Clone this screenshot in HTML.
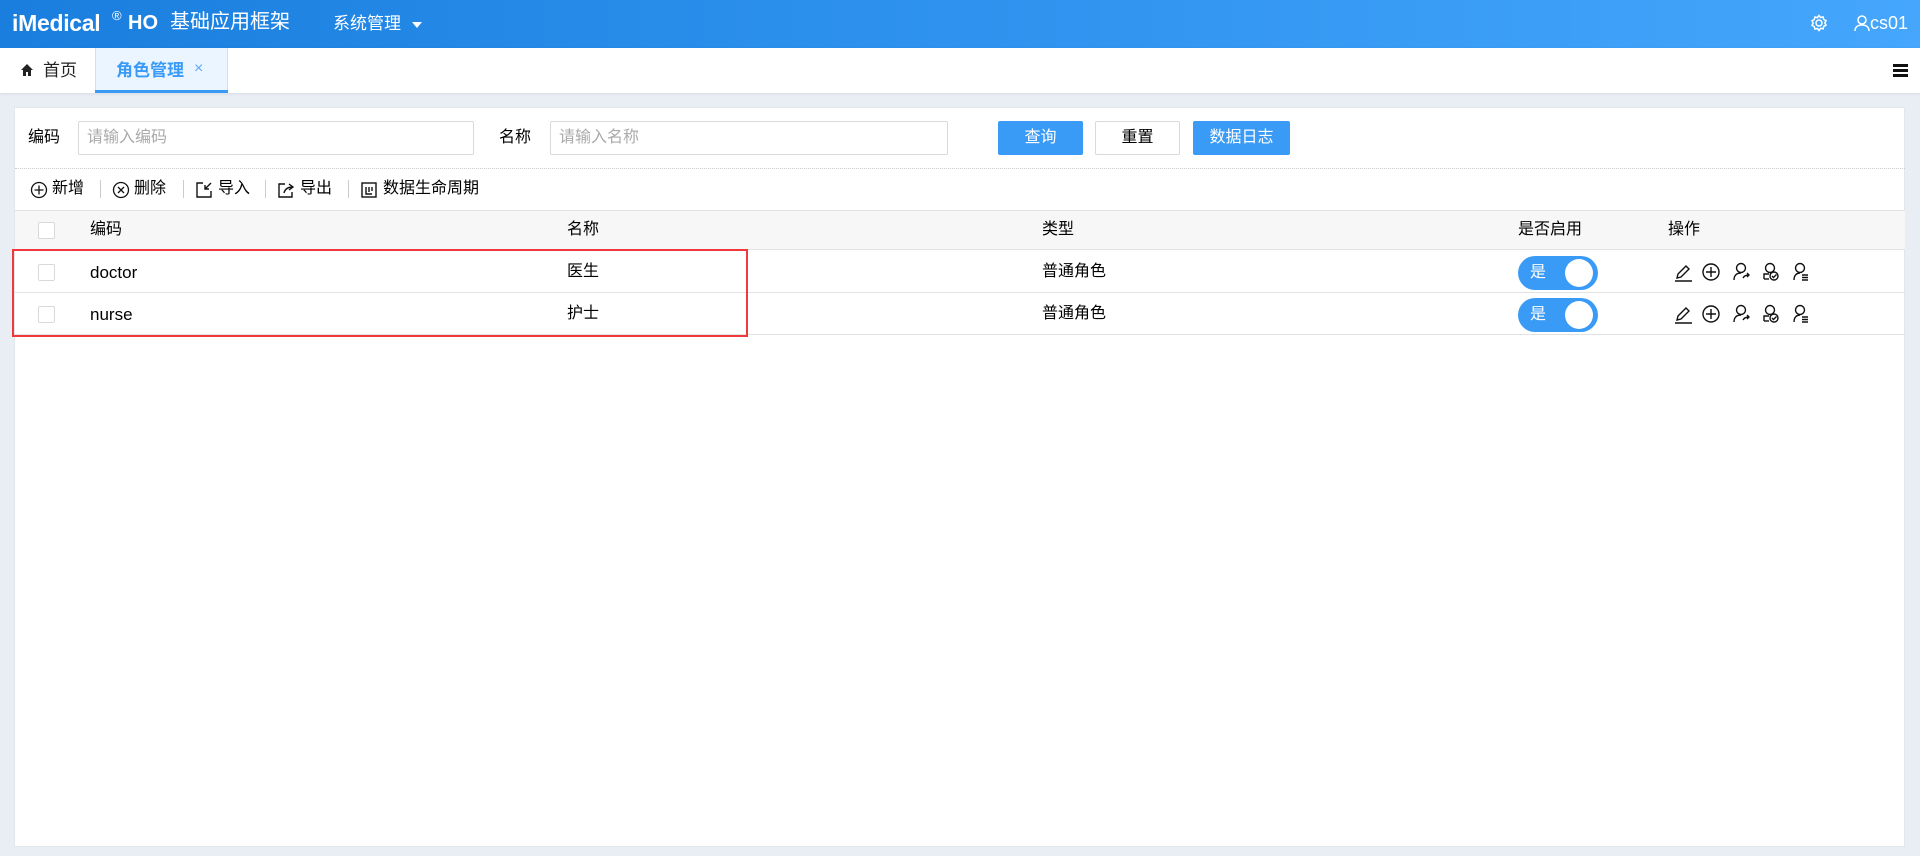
<!DOCTYPE html>
<html><head><meta charset="utf-8"><style>
*{box-sizing:border-box;margin:0;padding:0}
body{width:1920px;height:856px;overflow:hidden;background:#e9edf4;font-family:"Liberation Sans","Noto Sans CJK SC",sans-serif;color:#000;position:relative;line-height:1}
.abs{position:absolute}
.hdr{left:0;top:0;width:1920px;height:48px;background:linear-gradient(90deg,#1a7ede 0%,#2e92ee 50%,#45a6fc 100%);color:#fff}
.tabs{left:0;top:48px;width:1920px;height:45px;background:#fff;box-shadow:0 1px 3px rgba(0,0,0,.08)}
.card{left:14px;top:107px;width:1891px;height:740px;background:#fff;border:1px solid #e3e6eb}
.inp{height:34px;border:1px solid #d9d9d9;border-radius:2px;color:#aaa;font-size:16px;line-height:32px;padding-left:8px}
.btn{top:121px;height:34px;border-radius:2px;font-size:16px;line-height:34px;text-align:center}
.t16{font-size:16px}
.sep{width:1px;height:18px;background:#ccc;top:180px}
.cb{width:17px;height:17px;border:1px solid #d9d9d9;border-radius:2px;background:#fff}
.hl{height:1px;background:#e2e2e2;left:15px;width:1890px}
</style></head><body>
<div class="abs hdr">
  <div class="abs" style="left:12px;top:12px;font-size:23px;font-weight:bold;letter-spacing:-0.3px">iMedical</div>
  <div class="abs" style="left:112px;top:9px;font-size:13px">®</div>
  <div class="abs" style="left:128px;top:13px;font-size:20px;font-weight:bold">HO</div>
  <div class="abs" style="left:170px;top:12px;font-size:20px">基础应用框架</div>
  <div class="abs" style="left:333px;top:15px;font-size:17px">系统管理</div>
  <div class="abs" style="left:412px;top:22px;width:0;height:0;border-left:5px solid transparent;border-right:5px solid transparent;border-top:6px solid #fff"></div>
  <svg class="abs" style="left:1810px;top:14px" width="18" height="18" viewBox="0 0 18 18" fill="none" stroke="#fff" stroke-width="1.5"><circle cx="9" cy="9" r="3"/><path d="M9 1.5l1.6 2 2.5-.6.6 2.5 2.3 1.2-1.2 2.3 1.2 2.3-2.3 1.2-.6 2.5-2.5-.6L9 16.5l-1.6-2-2.5.6-.6-2.5-2.3-1.2L3.2 9 2 6.7l2.3-1.2.6-2.5 2.5.6z"/></svg>
  <svg class="abs" style="left:1853px;top:14px" width="18" height="18" viewBox="0 0 18 18" fill="none" stroke="#fff" stroke-width="1.5"><circle cx="9" cy="6" r="4"/><path d="M2 17c0-4 3-6 7-6s7 2 7 6"/></svg>
  <div class="abs" style="left:1870px;top:14px;font-size:18px">cs01</div>
</div>
<div class="abs tabs">
  <svg class="abs" style="left:20px;top:15px" width="14" height="14" viewBox="0 0 14 14"><path d="M7 1L1 7h2v6h3V9h2v4h3V7h2z" fill="#222"/></svg>
  <div class="abs t16" style="left:43px;top:14px;font-size:17px;color:#222">首页</div>
  <div class="abs" style="left:95px;top:0;width:133px;height:45px;background:#eaf5ff;border-left:1px solid #ddd;border-right:1px solid #ddd"></div>
  <div class="abs" style="left:95px;top:42px;width:133px;height:3px;background:#3a9bf7"></div>
  <div class="abs" style="left:116px;top:14px;font-size:17px;font-weight:bold;color:#3a9bf7">角色管理</div>
  <div class="abs" style="left:194px;top:13px;font-size:16px;color:#5aa9f7">×</div>
  <div class="abs" style="left:1893px;top:16px;width:15px;height:3px;background:#111;box-shadow:0 5px 0 #111,0 10px 0 #111"></div>
</div>
<div class="abs card"></div>
<div class="abs t16" style="left:28px;top:130px">编码</div>
<div class="abs inp" style="left:78px;top:121px;width:396px">请输入编码</div>
<div class="abs t16" style="left:499px;top:130px">名称</div>
<div class="abs inp" style="left:550px;top:121px;width:398px">请输入名称</div>
<div class="abs btn" style="left:998px;width:85px;background:#3a9bf7;color:#fff">查询</div>
<div class="abs btn" style="left:1095px;width:85px;border:1px solid #d9d9d9;line-height:32px">重置</div>
<div class="abs btn" style="left:1193px;width:97px;background:#3a9bf7;color:#fff">数据日志</div>
<div class="abs" style="left:15px;top:168px;width:1890px;border-top:1px dotted #ccc"></div>
<svg class="abs" style="left:30px;top:181px" width="18" height="18" viewBox="0 0 18 18" fill="none" stroke="#111" stroke-width="1.3"><circle cx="9" cy="9" r="7.5"/><path d="M9 4.5v9M4.5 9h9"/></svg>
<div class="abs t16" style="left:52px;top:181px">新增</div>
<div class="abs sep" style="left:100px"></div>
<svg class="abs" style="left:112px;top:181px" width="18" height="18" viewBox="0 0 18 18" fill="none" stroke="#111" stroke-width="1.3"><circle cx="9" cy="9" r="7.5"/><path d="M6 6l6 6M12 6l-6 6"/></svg>
<div class="abs t16" style="left:134px;top:181px">删除</div>
<div class="abs sep" style="left:183px"></div>
<svg class="abs" style="left:195px;top:181px" width="18" height="18" viewBox="0 0 18 18" fill="none" stroke="#111" stroke-width="1.4"><path d="M8 2H2v14h14v-6"/><path d="M16 2l-6 6M10 4v4h4"/></svg>
<div class="abs t16" style="left:218px;top:181px">导入</div>
<div class="abs sep" style="left:265px"></div>
<svg class="abs" style="left:277px;top:181px" width="18" height="18" viewBox="0 0 18 18" fill="none" stroke="#111" stroke-width="1.4"><path d="M8 3H2v13h13v-5"/><path d="M7 12c1-4 4-6 9-6M12 3l4 3-4 3"/></svg>
<div class="abs t16" style="left:300px;top:181px">导出</div>
<div class="abs sep" style="left:348px"></div>
<svg class="abs" style="left:360px;top:181px" width="18" height="18" viewBox="0 0 18 18" fill="none" stroke="#111" stroke-width="1.4"><rect x="2" y="2" width="14" height="14"/><path d="M6 6v7h6M9 6v5M12 6v4"/></svg>
<div class="abs t16" style="left:383px;top:181px">数据生命周期</div>
<div class="abs" style="left:15px;top:210px;width:1890px;height:40px;background:#f7f7f7;border-top:1px solid #e2e2e2;border-bottom:1px solid #e2e2e2"></div>
<div class="abs hl" style="top:292px"></div>
<div class="abs hl" style="top:334px"></div>
<div class="abs cb" style="left:38px;top:222px"></div>
<div class="abs cb" style="left:38px;top:264px"></div>
<div class="abs cb" style="left:38px;top:306px"></div>
<div class="abs t16" style="left:90px;top:222px">编码</div>
<div class="abs t16" style="left:567px;top:222px">名称</div>
<div class="abs t16" style="left:1042px;top:222px">类型</div>
<div class="abs t16" style="left:1518px;top:222px">是否启用</div>
<div class="abs t16" style="left:1668px;top:222px">操作</div>
<div class="abs" style="left:90px;top:264px;font-size:17px">doctor</div>
<div class="abs t16" style="left:567px;top:264px">医生</div>
<div class="abs t16" style="left:1042px;top:264px">普通角色</div>
<div class="abs" style="left:90px;top:306px;font-size:17px">nurse</div>
<div class="abs t16" style="left:567px;top:306px">护士</div>
<div class="abs t16" style="left:1042px;top:306px">普通角色</div>
<div class="abs" style="left:12px;top:249px;width:736px;height:88px;border:2.5px solid #f0393d"></div>
<div class="abs" style="left:1518px;top:256px;width:80px;height:34px;border-radius:17px;background:#3a9bf7"><div class="abs" style="left:12px;top:9px;color:#fff;font-size:16px">是</div><div class="abs" style="left:47px;top:3px;width:28px;height:28px;border-radius:50%;background:#fff"></div></div>
<div class="abs" style="left:1518px;top:298px;width:80px;height:34px;border-radius:17px;background:#3a9bf7"><div class="abs" style="left:12px;top:9px;color:#fff;font-size:16px">是</div><div class="abs" style="left:47px;top:3px;width:28px;height:28px;border-radius:50%;background:#fff"></div></div>
<svg class="abs" style="left:1671px;top:261px" width="150" height="22" viewBox="0 0 150 22" fill="none" stroke="#111" stroke-width="1.4">
 <path d="M4 20h17M6 17l1-4 8-8 3 3-8 8z"/>
 <circle cx="40" cy="11" r="8"/><path d="M40 6v10M35 11h10"/>
 <circle cx="70" cy="7" r="4.5"/><path d="M63 19c0-5 3-7 7-7"/><path d="M72 17c1-2 3-3 6-3M76 12l2 2-2 2"/>
 <circle cx="99" cy="7" r="4.5"/><path d="M93 18v-5h5"/><path d="M93 18h5"/><circle cx="103" cy="15" r="4"/><path d="M101 15l1.5 1.5 3-3"/>
 <circle cx="129" cy="7" r="4.5"/><path d="M123 19c0-5 3-7 6-7M131 14h6M131 16.5h6M131 19h6"/>
</svg>
<svg class="abs" style="left:1671px;top:303px" width="150" height="22" viewBox="0 0 150 22" fill="none" stroke="#111" stroke-width="1.4">
 <path d="M4 20h17M6 17l1-4 8-8 3 3-8 8z"/>
 <circle cx="40" cy="11" r="8"/><path d="M40 6v10M35 11h10"/>
 <circle cx="70" cy="7" r="4.5"/><path d="M63 19c0-5 3-7 7-7"/><path d="M72 17c1-2 3-3 6-3M76 12l2 2-2 2"/>
 <circle cx="99" cy="7" r="4.5"/><path d="M93 18v-5h5"/><path d="M93 18h5"/><circle cx="103" cy="15" r="4"/><path d="M101 15l1.5 1.5 3-3"/>
 <circle cx="129" cy="7" r="4.5"/><path d="M123 19c0-5 3-7 6-7M131 14h6M131 16.5h6M131 19h6"/>
</svg>
</body></html>
